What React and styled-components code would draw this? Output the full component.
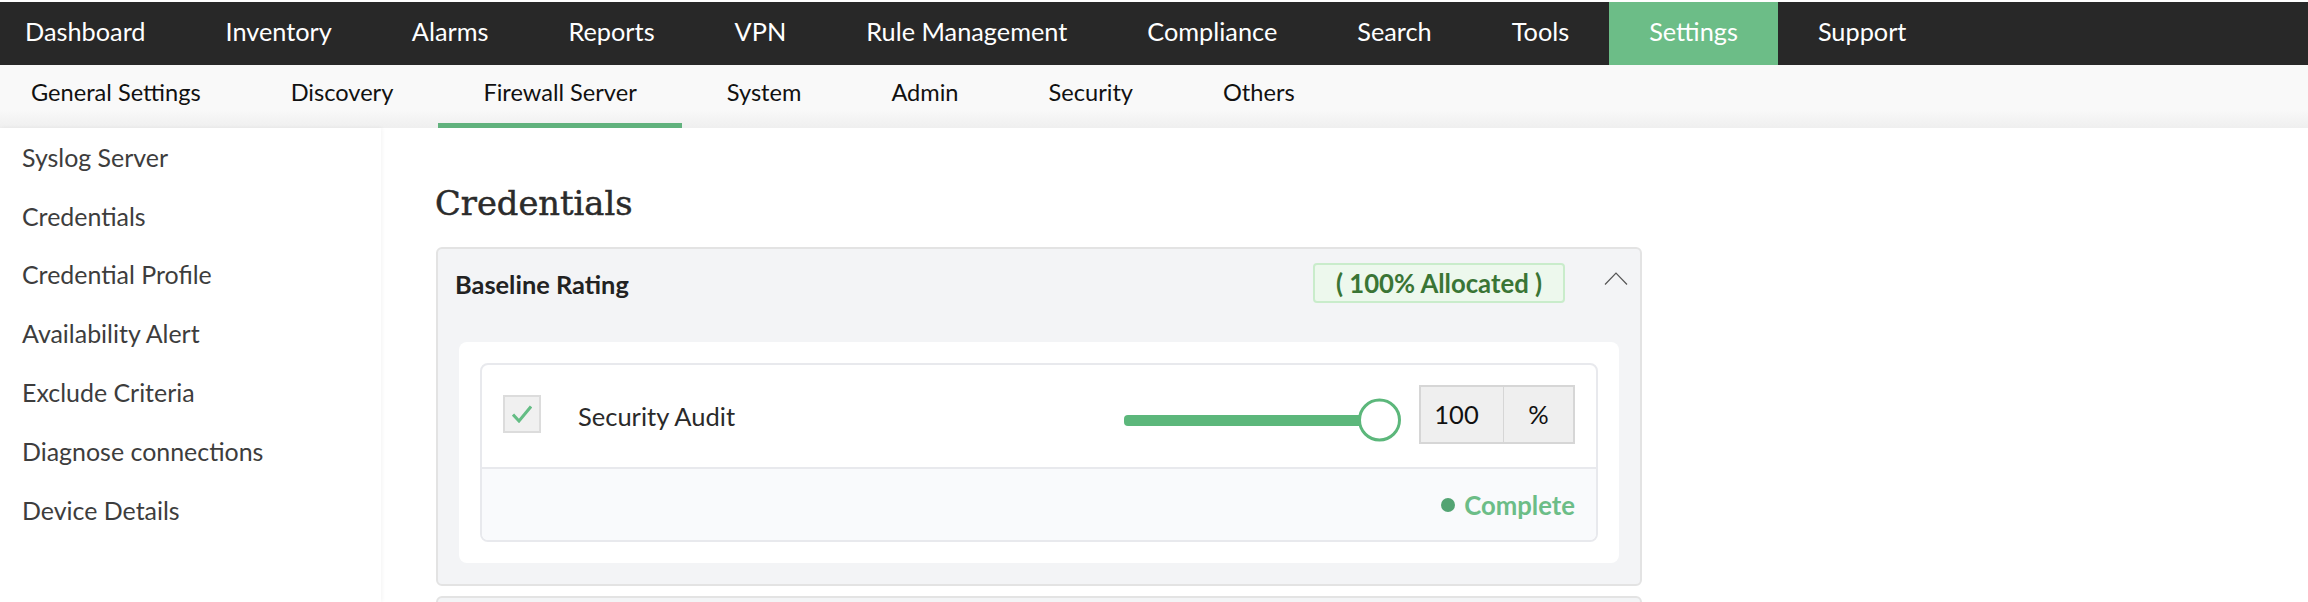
import React from 'react';
import styled, { createGlobalStyle } from 'styled-components';

const GlobalStyle = createGlobalStyle`
  html, body {
    margin: 0;
    padding: 0;
    background: #fff;
    font-family: Lato, 'Noto Sans', sans-serif;
  }
  * {
    box-sizing: border-box;
  }
`;

const Page = styled.div`
  width: 2308px;
  height: 602px;
  overflow: hidden;
  padding-top: 2px;
  background: #fff;
  display: flex;
  flex-direction: column;
`;

const TopNav = styled.nav`
  height: 63px;
  flex: none;
  background: #282828;
  display: flex;
`;

const TopItem = styled.a`
  display: flex;
  align-items: center;
  padding: 0 40px 5px;
  color: #fff;
  font-size: 25.3px;
  background: ${props => (props.active ? '#6cbd87' : 'transparent')};
  &:first-child {
    padding-left: 25px;
  }
`;

const SubNav = styled.nav`
  height: 63px;
  flex: none;
  display: flex;
  background: linear-gradient(#f9f9f9 0, #f9f9f9 70%, #efefef 100%);
`;

const SubItem = styled.a`
  display: flex;
  align-items: center;
  padding: 0 45px 4px;
  color: #111;
  font-size: 23.6px;
  border-bottom: 5px solid ${props => (props.active ? '#61b27d' : 'transparent')};
  &:first-child {
    padding-left: 31px;
  }
`;

const Body = styled.div`
  flex: 1;
  display: flex;
  min-height: 0;
`;

const Sidebar = styled.aside`
  width: 381px;
  flex: none;
  box-shadow: 1px 0 4px rgba(0, 0, 0, 0.05);
`;

const SideItem = styled.div`
  height: 58.8px;
  display: flex;
  align-items: center;
  padding: 0 0 1px 22px;
  color: #3d3d3d;
  font-size: 24.95px;
`;

const Main = styled.main`
  flex: 1;
  padding: 56px 0 0 55px;
`;

const Title = styled.h1`
  margin: 0 0 24px -1px;
  font-family: 'DejaVu Serif', serif;
  font-weight: 400;
  font-size: 33.7px;
  line-height: 39px;
  color: #2b2b2b;
  -webkit-text-stroke: 0.5px #2b2b2b;
`;

const Card = styled.section`
  width: 1206px;
  background: #f3f4f6;
  border: 2px solid #e3e3e3;
  border-radius: 6px;
  padding: 0 21px 21px;
  margin-bottom: 10px;
`;

const CardHeader = styled.div`
  height: 93px;
  display: flex;
  align-items: flex-start;
`;

const CardTitle = styled.div`
  flex: 1;
  padding-top: 19px;
  margin-left: -4px;
  color: #222;
  font-size: 25.4px;
  line-height: 32px;
  font-weight: 700;
`;

const Badge = styled.div`
  margin-top: 14px;
  width: 252px;
  height: 40px;
  display: flex;
  align-items: center;
  justify-content: center;
  background: #edf8ed;
  border: 2px solid #c9eccb;
  border-radius: 4px;
  color: #3a7535;
  font-size: 25.7px;
  font-weight: 700;
`;

const Chevron = styled.svg`
  margin: 23px -9px 0 39px;
  width: 24px;
  height: 13px;
  flex: none;
`;

const InnerPanel = styled.div`
  background: #fff;
  border-radius: 8px;
  padding: 21px;
`;

const ItemCard = styled.div`
  border: 2px solid #e8e9ed;
  border-radius: 8px;
  overflow: hidden;
`;

const ItemRow = styled.div`
  height: 102px;
  display: flex;
  align-items: center;
  padding: 0 21px;
`;

const CheckBox = styled.div`
  width: 38px;
  height: 38px;
  flex: none;
  margin-top: -4px;
  background: #f0f0f0;
  border: 2px solid #dcdcdc;
  display: flex;
  align-items: center;
  justify-content: center;
`;

const ItemName = styled.div`
  margin-left: 37px;
  flex: 1;
  color: #2a2a2a;
  font-size: 25.5px;
`;

const Slider = styled.div`
  position: relative;
  width: 256px;
  height: 11px;
  margin: 8px 39px 0 0;
  background: #5cb77b;
  border-radius: 4px;
`;

const Thumb = styled.div`
  position: absolute;
  top: 50%;
  right: -21px;
  width: 43px;
  height: 43px;
  transform: translateY(-50%);
  background: #fff;
  border: 3px solid #5cb77b;
  border-radius: 50%;
`;

const ValueGroup = styled.div`
  display: flex;
  height: 59px;
  margin-top: -4px;
  border: 2px solid #d6d6d6;
  background: #efefef;
  color: #111;
  font-size: 25.5px;
`;

const ValueCell = styled.div`
  width: ${props => props.width}px;
  padding-right: ${props => props.inset}px;
  display: flex;
  align-items: center;
  justify-content: center;
  & + & {
    border-left: 1px solid #d6d6d6;
  }
`;

const ItemFooter = styled.div`
  height: 73px;
  display: flex;
  align-items: center;
  justify-content: flex-end;
  padding: 0 21px 0;
  border-top: 2px solid #e8e9ed;
  background: #f9fafc;
`;

const StatusDot = styled.span`
  width: 14px;
  height: 14px;
  margin-right: 9px;
  border-radius: 50%;
  background: #53a473;
`;

const StatusText = styled.span`
  color: #6cbd87;
  font-size: 25.7px;
  font-weight: 700;
`;

const TOP_ITEMS = ['Dashboard', 'Inventory', 'Alarms', 'Reports', 'VPN', 'Rule Management', 'Compliance', 'Search', 'Tools', 'Settings', 'Support'];
const SUB_ITEMS = ['General Settings', 'Discovery', 'Firewall Server', 'System', 'Admin', 'Security', 'Others'];
const SIDE_ITEMS = ['Syslog Server', 'Credentials', 'Credential Profile', 'Availability Alert', 'Exclude Criteria', 'Diagnose connections', 'Device Details'];

const App = () => (
  <Page>
    <GlobalStyle />
    <TopNav>
      {TOP_ITEMS.map(item => (
        <TopItem key={item} active={item === 'Settings' ? 1 : 0}>{item}</TopItem>
      ))}
    </TopNav>
    <SubNav>
      {SUB_ITEMS.map(item => (
        <SubItem key={item} active={item === 'Firewall Server' ? 1 : 0}>{item}</SubItem>
      ))}
    </SubNav>
    <Body>
      <Sidebar>
        {SIDE_ITEMS.map(item => (
          <SideItem key={item}>{item}</SideItem>
        ))}
      </Sidebar>
      <Main>
        <Title>Credentials</Title>
        <Card>
          <CardHeader>
            <CardTitle>Baseline Rating</CardTitle>
            <Badge>( 100% Allocated )</Badge>
            <Chevron viewBox="0 0 24 13" fill="none">
              <polyline points="1,12.5 12,1 23,12.5" stroke="#555" strokeWidth="1.2" />
            </Chevron>
          </CardHeader>
          <InnerPanel>
            <ItemCard>
              <ItemRow>
                <CheckBox>
                  <svg width="20" height="18" viewBox="0 0 20 18" fill="none">
                    <polyline points="1,9.5 7,16 19,1.5" stroke="#64bd85" strokeWidth="3" />
                  </svg>
                </CheckBox>
                <ItemName>Security Audit</ItemName>
                <Slider>
                  <Thumb />
                </Slider>
                <ValueGroup>
                  <ValueCell width={82} inset={11}>100</ValueCell>
                  <ValueCell width={70} inset={0}>%</ValueCell>
                </ValueGroup>
              </ItemRow>
              <ItemFooter>
                <StatusDot />
                <StatusText>Complete</StatusText>
              </ItemFooter>
            </ItemCard>
          </InnerPanel>
        </Card>
        <Card />
      </Main>
    </Body>
  </Page>
);

export default App;
